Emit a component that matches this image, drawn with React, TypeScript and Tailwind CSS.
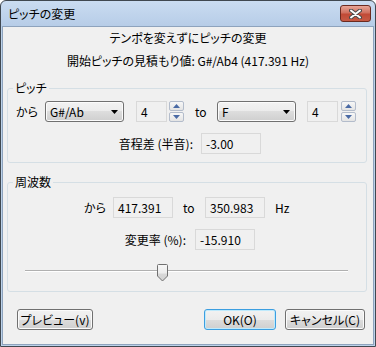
import React from "react";

const font = "[font-family:'Noto_Sans_CJK_JP','Liberation_Sans',sans-serif] [font-feature-settings:'palt']";

function Combo({ value }: { value: string }) {
  return (
    <div className="flex h-[21px] w-[79px] items-center justify-between rounded-[3px] border border-[#707070] bg-[linear-gradient(#f2f2f2,#ebebeb_50%,#dddddd_50%,#cfcfcf)] pl-[4px] pr-[5px] shadow-[inset_0_0_0_1px_#fbfbfb]">
      <span>{value}</span>
      <svg width="7" height="4" viewBox="0 0 7 4">
        <path d="M0 0h7L3.5 4z" fill="#000" />
      </svg>
    </div>
  );
}

function SpinButtons() {
  return (
    <div className="flex h-[21px] w-[15px] flex-col gap-[1px]">
      {[0, 1].map((i) => (
        <div
          key={i}
          className="flex flex-1 items-center justify-center rounded-[2px] border border-[#b3bccb] bg-[linear-gradient(#f7f7f7,#e4e4e4)]"
        >
          <svg width="7" height="4" viewBox="0 0 7 4">
            <path d={i === 0 ? "M0 4h7L3.5 0z" : "M0 0h7L3.5 4z"} fill="#4a6aa5" />
          </svg>
        </div>
      ))}
    </div>
  );
}

function Field({ value, w }: { value: string; w: string }) {
  return (
    <div className={`flex h-[21px] items-center border border-[#d9d9d9] bg-[#f0f0f0] pl-[4px] ${w}`}>
      {value}
    </div>
  );
}

function Button({ label, w, primary }: { label: string; w: string; primary?: boolean }) {
  return (
    <div
      className={`flex h-[21px] items-center justify-center rounded-[3px] border bg-[linear-gradient(#f2f2f2,#ebebeb_50%,#dddddd_50%,#cfcfcf)] ${w} ${
        primary
          ? "border-[#3c9ee0] shadow-[inset_0_0_0_1px_#bfeafc]"
          : "border-[#707070] shadow-[inset_0_0_0_1px_#fbfbfb]"
      }`}
    >
      {label}
    </div>
  );
}

export default function App() {
  return (
    <div
      className={`flex h-[347px] w-[376px] flex-col rounded-t-[6px] border border-[#404850] bg-[linear-gradient(#cadcf1,#b6cce7_26px,#bcd2ea_26px)] text-[12px] leading-[16px] text-black ${font}`}
    >
      <div className="flex h-[25px] shrink-0">
        <span className="ml-[7px] mt-[5px]">ピッチの変更</span>
        <div className="ml-auto mr-[4px] mt-[4px] flex h-[17px] w-[31px] items-center justify-center rounded-[3px] border border-[#6b2a20] bg-[linear-gradient(#e7a596,#d0705f_45%,#c14a36_55%,#c65a45)]">
          <svg width="13" height="10" viewBox="0 0 13 10">
            <path d="M2 1.5l9 7M11 1.5l-9 7" stroke="#4a4a4a" strokeWidth="4" strokeLinecap="round" />
            <path d="M2 1.5l9 7M11 1.5l-9 7" stroke="#fff" strokeWidth="2" strokeLinecap="round" />
          </svg>
        </div>
      </div>

      <div className="flex flex-1 px-[1px] pb-[1px]">
        <div className="flex flex-1 flex-col border border-[#8ea3bd] bg-[#f0f0f0] px-[4px]">
          <p className="mt-[3px] text-center">テンポを変えずにピッチの変更</p>
          <p className="mt-[7px] text-center">開始ピッチの見積もり値: G#/Ab4 (417.391 Hz)</p>

          <fieldset className="mt-[11px] w-[360px] rounded-[3px] border border-[#d5dfe5] pb-[8px]">
            <legend className="ml-[5px] px-[2px]">ピッチ</legend>
            <div className="mt-[5px] flex items-center pl-[8px]">
              <span className="w-[29px]">から</span>
              <Combo value="G#/Ab" />
              <div className="ml-[12px]">
                <Field value="4" w="w-[31px]" />
              </div>
              <div className="ml-[2px]">
                <SpinButtons />
              </div>
              <span className="ml-[11px] w-[22px]">to</span>
              <Combo value="F" />
              <div className="ml-[11px]">
                <Field value="4" w="w-[31px]" />
              </div>
              <div className="ml-[3px]">
                <SpinButtons />
              </div>
            </div>
            <div className="mt-[11px] flex items-center">
              <span className="w-[185px] text-right">音程差 (半音):</span>
              <div className="ml-[8px]">
                <Field value="-3.00" w="w-[60px]" />
              </div>
            </div>
          </fieldset>

          <fieldset className="mt-[11px] w-[360px] rounded-[3px] border border-[#d5dfe5] pb-[9px]">
            <legend className="ml-[5px] px-[2px]">周波数</legend>
            <div className="mt-[7px] flex items-center">
              <span className="ml-[76px] w-[29px]">から</span>
              <Field value="417.391" w="w-[60px]" />
              <span className="ml-[10px] w-[22px]">to</span>
              <Field value="350.983" w="w-[60px]" />
              <span className="ml-[10px]">Hz</span>
            </div>
            <div className="mt-[11px] flex items-center">
              <span className="w-[178px] text-right">変更率 (%):</span>
              <div className="ml-[9px]">
                <Field value="-15.910" w="w-[60px]" />
              </div>
            </div>
            <div className="relative ml-[17px] mt-[20px] h-[2px] w-[323px] border-t border-[#b0b0b0] bg-white">
              <svg
                className="absolute left-[132px] top-[-7px]"
                width="11"
                height="18"
                viewBox="0 0 11 18"
              >
                <defs>
                  <linearGradient id="th" x1="0" y1="0" x2="0" y2="1">
                    <stop offset="0" stopColor="#f7f7f7" />
                    <stop offset="0.5" stopColor="#ececec" />
                    <stop offset="0.6" stopColor="#d7d7d7" />
                    <stop offset="1" stopColor="#d2d2d2" />
                  </linearGradient>
                </defs>
                <path
                  d="M1.5 0.5h8a1 1 0 0 1 1 1v10.5l-5 5l-5-5v-10.5a1 1 0 0 1 1-1z"
                  fill="url(#th)"
                  stroke="#707070"
                />
              </svg>
            </div>
            <div className="h-[10px]" />
          </fieldset>

          <div className="mt-[17px] flex items-center">
            <div className="ml-[10px]">
              <Button label="プレビュー(v)" w="w-[76px]" />
            </div>
            <div className="ml-[111px]">
              <Button label="OK(O)" w="w-[72px]" primary />
            </div>
            <div className="ml-[9px]">
              <Button label="キャンセル(C)" w="w-[80px]" />
            </div>
          </div>
        </div>
      </div>
    </div>
  );
}
